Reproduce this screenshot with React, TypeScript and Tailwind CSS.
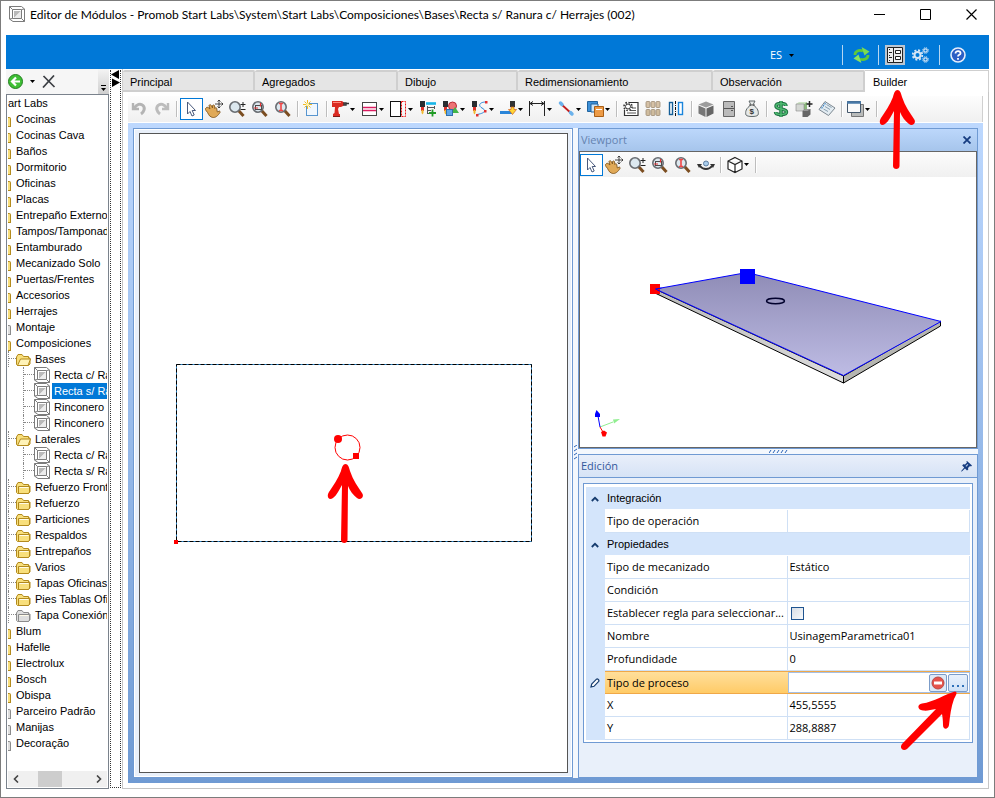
import React from "react";

const sans = "font-['Liberation_Sans',Arial,sans-serif]";
const ui = "font-['Open_Sans','Segoe_UI',sans-serif]";

type Kids = { children: React.ReactNode };

function Ico({ children }: Kids) {
  return (
    <svg width="18" height="18" viewBox="0 0 18 18" fill="none" className="shrink-0" aria-hidden="true">
      {children}
    </svg>
  );
}

function Caret({ className = "fill-black" }: { className?: string }) {
  return (
    <svg width="5" height="3" viewBox="0 0 5 3" className={"shrink-0 " + className} aria-hidden="true">
      <path d="M0 0h5L2.500 3z" />
    </svg>
  );
}

const Undo = () => (
  <Ico>
    <path d="M3 3v6h6" stroke="#b4b4b4" strokeWidth="2.400" />
    <path d="M4 8.500C6.500 4 10.500 3 13 5.500c2.500 2.500 1 6.500-2 8.500" stroke="#b4b4b4" strokeWidth="3" />
  </Ico>
);
const Redo = () => (
  <Ico>
    <path d="M15 3v6H9" stroke="#bcbcbc" strokeWidth="2.400" />
    <path d="M14 8.500C11.500 4 7.500 3 5 5.500c-2.500 2.500-1 6.500 2 8.500" stroke="#bcbcbc" strokeWidth="3" />
  </Ico>
);
const Pointer = () => (
  <Ico>
    <path d="M5.500 2v12l2.500-2.500 2 4.500 2.200-1-2-4.500h3.300z" fill="#fff" stroke="#4a5a7c" strokeLinejoin="round" />
  </Ico>
);
const Hand = () => (
  <Ico>
    <path
      d="M1 8c1-1.500 2.500-.5 4 1L4 5.500c.5-1.200 1.800-1 2.300 0L7.500 8V5.500c.8-1 2-.5 2.100.5l.2 2.500c1-1.500 2-.8 2 .5l.5 3 2-1c1.200.3 1 1.500 0 2.500-2 3-5 5-8 3.500C3.500 16 3.500 13 1 10.500 0 9.500.2 8.600 1 8z"
      fill="#e0a957"
      stroke="#80561d"
      strokeWidth=".9"
    />
    <path d="M14 0v8M10 4h8M14 0l-1.500 1.500M14 0l1.500 1.500M18 4l-1.500-1.500M18 4l-1.500 1.500M14 8l-1.500-1.500M14 8l1.500-1.500" stroke="#333" strokeWidth=".9" />
  </Ico>
);
const Lens = () => (
  <>
    <path d="M10.500 10.500L15.500 16" stroke="#7b4d20" strokeWidth="3" />
    <circle cx="7" cy="7" r="5.200" fill="#dce8ef" stroke="#696d72" strokeWidth="1.600" />
  </>
);
const ZoomPm = () => (
  <Ico>
    <Lens />
    <path d="M15 2v5M12.500 4.500h5M12.500 9.500h5" stroke="#222" />
  </Ico>
);
const ZoomBox = () => (
  <Ico>
    <Lens />
    <rect x="4.500" y="5.500" width="6" height="4" stroke="#4b4b4b" />
    <path d="M3 8h4M9.500 3v3.500" stroke="#e33" strokeWidth="1.200" />
  </Ico>
);
const ZoomFit = () => (
  <Ico>
    <Lens />
    <path d="M5 3.500h4M5 10.500h4M7 4v6" stroke="#f04545" strokeWidth="1.600" />
  </Ico>
);
const NewItem = () => (
  <Ico>
    <rect x="3.500" y="3.500" width="11" height="12" fill="#f1f7fd" stroke="#5795cf" />
    <path d="M4.500 0v9M0 4.500h9M1.500 1.500l6 6M7.500 1.500l-6 6" stroke="#f2bd25" />
    <circle cx="4.500" cy="4.500" r="1.500" fill="#fff7ae" />
  </Ico>
);
const Drill = () => (
  <Ico>
    <path d="M0 1h10l2 1.500v3L9 7H7l-1 2 1 5h1v3H1v-3l1.500-1 .5-6H0z" fill="#da2b22" />
    <path d="M12 3h2v2h-2zM14 3.500h3" stroke="#333" strokeWidth="1.400" />
    <path d="M1 2.500h8" stroke="#ff8b7c" />
    <path d="M1 16.500h7" stroke="#7b1a16" />
  </Ico>
);
const Rails = () => (
  <Ico>
    <rect x="1.500" y="2.500" width="14" height="13" fill="#fff" stroke="#444" />
    <path d="M2 7.500h13M2 10.500h13" stroke="#dc1d61" strokeWidth="1.300" />
  </Ico>
);
const Side = () => (
  <Ico>
    <rect x=".5" y="1.500" width="10" height="15" fill="#fff" stroke="#111" />
    <rect x="11.500" y="1.500" width="4" height="15" stroke="#e11" strokeDasharray="2 1" />
  </Ico>
);
const Bit = () => (
  <>
    <path d="M1 1h5v6H1z" fill="#292d31" />
    <path d="M2 7h3v4H2z" fill="#e0312a" />
    <path d="M2.500 10h2v3l-1 1.500-1-1.500z" fill="#f1b82c" />
  </>
);
const BitList = () => (
  <Ico>
    <Bit />
    <path d="M7 3.500h10" stroke="#17b5e7" strokeWidth="2.600" />
    <path d="M9 7.500h7M9 10.500h3M9 13.500h2M8.500 6v8M15.500 6v3" stroke="#555" />
    <path d="M13.500 9.500v7M10 13h7" stroke="#219b26" strokeWidth="1.800" />
  </Ico>
);
const BitShapes = () => (
  <Ico>
    <Bit />
    <circle cx="10.500" cy="6" r="4" fill="#ee7475" stroke="#b92a35" />
    <path d="M13 7l4 6H9z" fill="#43b649" />
    <rect x="4.500" y="9.500" width="6" height="6" fill="#5ea6e8" stroke="#326faa" />
  </Ico>
);
const BitCurve = () => (
  <Ico>
    <Bit />
    <path d="M15 2C8 2 7 6 11 8s4 5-5 6.500" stroke="#2d87d8" />
    <path d="M14 1h2.500v2.500H14zM13 10h2.500v2.500H13zM5 14h2.500v2.500H5z" fill="#e13030" />
  </Ico>
);
const Edge = () => (
  <Ico>
    <path d="M0 11h12v3H0z" fill="#2b86d9" />
    <path d="M10 1h5v6h-5z" fill="#333" />
    <path d="M11 7h3v2.500h2.500l-4 5-4-5H11z" fill="#ffd633" stroke="#d25e20" strokeWidth=".7" />
  </Ico>
);
const Dimension = () => (
  <Ico>
    <path d="M.5 1v15M15.500 1v15M1 3.500h14M4 1.500l-3 2 3 2M12 1.500l3 2-3 2" stroke="#222" />
  </Ico>
);
const Link = () => (
  <Ico>
    <path d="M3 4l11 10" stroke="#c11d1d" strokeWidth="1.800" />
    <path d="M2.500 3l1.500 1.500M12.500 12.500l1.500 1.500" stroke="#6bb2ec" strokeWidth="3.500" strokeLinecap="round" />
  </Ico>
);
const Copies = () => (
  <Ico>
    <path d="M.5 1.500h10v10H.5z" fill="#3d90d8" stroke="#21639d" />
    <path d="M4 4h7v8H4z" fill="#cde6fa" stroke="#21639d" />
    <path d="M7.500 6.500h9v10h-9z" fill="#ed9b46" stroke="#a95e15" />
    <path d="M9 9.500h6" stroke="#fff" />
  </Ico>
);
const GearPage = () => (
  <Ico>
    <path d="M8 2.500h8v13H2.500V10" fill="#fff" stroke="#333" strokeWidth="1.200" />
    <path d="M10 8h4M8 10.500h6M5 13h9" stroke="#555" />
    <circle cx="6" cy="6.500" r="2.500" fill="#fff" stroke="#333" />
    <circle cx="6" cy="6.500" r="4" stroke="#333" strokeWidth="1.600" strokeDasharray="1.600 1.540" />
  </Ico>
);
const Blocks = () => (
  <Ico>
    {[1, 6, 11].map((x) => (
      <React.Fragment key={x}>
        <rect x={x} y="1.500" width="4" height="6" rx="1" fill="#d5c1a6" stroke="#9d8b74" strokeWidth=".8" />
        <rect x={x} y="9.500" width="4" height="6" rx="1" fill="#cfbc9e" stroke="#9d8b74" strokeWidth=".8" />
      </React.Fragment>
    ))}
  </Ico>
);
const Mirror = () => (
  <Ico>
    <rect x="1.500" y="2.500" width="3" height="12" fill="#fff" stroke="#155f98" strokeWidth="1.400" />
    <path d="M7.500 1v16" stroke="#111" strokeDasharray="3 1 1 1" />
    <rect x="10.500" y="2.500" width="4" height="12" fill="#fff" stroke="#1b85dc" strokeWidth="1.400" />
  </Ico>
);
const Cube = () => (
  <Ico>
    <path d="M9 1.500l7.500 3L9 7.500l-7.500-3z" fill="#9c9c9c" />
    <path d="M1.500 5.500l7 3v8.500l-7-3.500z" fill="#777" />
    <path d="M16.500 5.500l-7 3v8.500l7-3.500z" fill="#666" />
  </Ico>
);
const Cabinet = () => (
  <Ico>
    <path d="M3.500 1.500h11v15h-11z" fill="#bbb" stroke="#666" />
    <path d="M4 8.500h10M11 6.500h2M11 10.500h2" stroke="#555" />
  </Ico>
);
const MoneyBag = () => (
  <Ico>
    <path d="M6 1h6l-2 4c5 3 6 7 5 10-1 2-11 2-12 0-1-3 0-7 5-10z" fill="#e6e9e8" stroke="#61696b" />
    <path d="M6 5h6" stroke="#555" />
    <text x="6.500" y="13.500" fontSize="8" fontFamily="Liberation Sans" fontWeight="700" fill="#333">$</text>
  </Ico>
);
const dollarPath =
  "M14 6c0-2-2-2.500-5-2.500S4 4.200 4 6s2 2.500 5 3 5.500 1.200 5.500 3-2.500 2.500-5.500 2.500S3.500 14 3.500 12M9 1v16";
const Dollar = () => (
  <Ico>
    <path d={dollarPath} stroke="#207044" strokeWidth="3.500" />
    <path d={dollarPath} stroke="#4dbb70" strokeWidth="1.500" />
  </Ico>
);
const AddBlock = () => (
  <Ico>
    <path d="M1 4l3-2h8l-3 2z" fill="#cde3c4" />
    <path d="M9 4l3-2v7l-3 2z" fill="#8cb97c" />
    <path d="M1 4h8v7H1z" fill="#d5d8d4" stroke="#888" strokeWidth=".6" />
    <path d="M7.500 11l3-2h5v5.500l-3 2.500h-5z" fill="#666" />
    <path d="M7.500 11l3-2h5l-3 2z" fill="#999" />
    <path d="M14.500 1v6M11.500 4h6" stroke="#222" strokeWidth="1.500" />
  </Ico>
);
const Tag = () => (
  <Ico>
    <path d="M7 1.500L17 8l-6.500 7.500L1 9.500z" fill="#e3ecf2" stroke="#7c8790" />
    <path d="M8.500 4.500l5 3M7 6.500l5 3M5.500 9l4.500 2.500" stroke="#8aa0b0" />
    <path d="M6.500 3.500l1 .5M5 5.500l1 .5M3.500 7.500l1 .5" stroke="#3b83c4" strokeWidth="1.500" />
  </Ico>
);
const Windows = () => (
  <Ico>
    <path d="M4.500 4.500h12v12h-12z" fill="#b9bbba" stroke="#777" />
    <path d="M.5 1.500h13v11H.5z" fill="#fafafa" stroke="#44576b" />
    <path d="M0 2.500h14" stroke="#4778a7" strokeWidth="2.500" />
  </Ico>
);
const Orbit = () => (
  <Ico>
    <path d="M3 10c3 4 9 4 12 0" stroke="#333" strokeWidth="2" />
    <path d="M0 8h5l-3 4zM18 8h-5l3 4z" fill="#333" />
    <circle cx="9" cy="7.500" r="2.500" fill="#a9cdec" stroke="#5d7da0" />
  </Ico>
);
const WireCube = () => (
  <Ico>
    <path d="M9 1.500l7 3.500v8l-7 3.500L2 13V5zM2 5l7 3.500L16 5M9 8.500v8" fill="#fff" stroke="#222" strokeWidth="1.200" />
  </Ico>
);

function ModuleIcon() {
  return (
    <svg width="16" height="16" viewBox="0 0 16 16" fill="none" className="shrink-0" aria-hidden="true">
      <path d="M.5.500h12l3 2.500v12.500H4L.5 13z" fill="#fff" stroke="#7c7c7c" />
      <path d="M3.500 3.500h9v9h-9z" fill="#fff" stroke="#7c7c7c" />
      <path d="M.5.500l3 3M12.500 3.500L15.500 3M3.500 12.500L.5 13M12.500 12.500l3 3" stroke="#7c7c7c" />
      <path d="M5 12V5h7z" fill="#b9b9b9" />
      <path d="M5 12l7-7v7z" fill="#ececec" />
    </svg>
  );
}

function Folder({ open = false, gray = false }: { open?: boolean; gray?: boolean }) {
  const line = gray ? "#8b8b8b" : "#b38a1d";
  const fill = gray ? "#dedede" : "#f8df7c";
  return (
    <svg width="15" height="14" viewBox="0 0 15 14" className="mt-[2px] shrink-0" aria-hidden="true">
      <path d="M.5 11.500V4l1.500-2.500h4L7.500 3.500h5V5l1.500 0V11l-1.500 1.500h-11z" fill={fill} stroke={line} />
      {open ? (
        <path d="M1.500 12.500l3-6.500h10l-2.500 6.500z" fill="#fff3b8" stroke={line} />
      ) : (
        <path d="M2.500 12.500V5.500h11v5.500l-1 1.500z" fill={fill} stroke={line} />
      )}
      {!open && <path d="M3.500 6.500h9" stroke="#fffbe8" />}
    </svg>
  );
}

function Btn({ label, active, children }: Kids & { label: string; active?: boolean }) {
  return (
    <button
      type="button"
      aria-label={label}
      className={
        "flex h-[22px] w-[23px] shrink-0 items-center " + (active ? "border border-[#0078d7] bg-white pl-px" : "pl-[2px]")
      }
    >
      {children}
    </button>
  );
}

function Drop({ label, children }: Kids & { label: string }) {
  return (
    <button type="button" aria-label={label} className="flex h-[22px] w-[29px] shrink-0 items-center pl-[2px]">
      {children}
      <Caret />
    </button>
  );
}

const Sep = () => <span className="mx-[2px] h-4 w-[2px] shrink-0 border-l border-[#bdbdbd] bg-white" />;

function Arrow() {
  return (
    <path
      d="M18.500 0c2.500 0 3.500 3 4.500 7 3 9 8 16 12 22 3 4-2 8-5 5-4-3-7-7-9-12l-.5 54c0 4-6.500 4-6.500 0L15 21c-3 5-5 10-9 13-4 3-7-1-4-6 4-6 9-13 12-21 1-4 2-7 4.500-7z"
      fill="#f00"
    />
  );
}

type TreeRow = { text: string; kind: "root" | "cat" | "catgray" | "open" | "closed" | "gray" | "leaf"; selected?: boolean };

const tree: TreeRow[] = [
  { text: "art Labs", kind: "root" },
  { text: "Cocinas", kind: "cat" },
  { text: "Cocinas Cava", kind: "cat" },
  { text: "Baños", kind: "cat" },
  { text: "Dormitorio", kind: "cat" },
  { text: "Oficinas", kind: "cat" },
  { text: "Placas", kind: "cat" },
  { text: "Entrepaño Externo", kind: "cat" },
  { text: "Tampos/Tamponados", kind: "cat" },
  { text: "Entamburado", kind: "cat" },
  { text: "Mecanizado Solo", kind: "cat" },
  { text: "Puertas/Frentes", kind: "cat" },
  { text: "Accesorios", kind: "cat" },
  { text: "Herrajes", kind: "cat" },
  { text: "Montaje", kind: "catgray" },
  { text: "Composiciones", kind: "cat" },
  { text: "Bases", kind: "open" },
  { text: "Recta c/ Ranura", kind: "leaf" },
  { text: "Recta s/ Ranura", kind: "leaf", selected: true },
  { text: "Rinconero", kind: "leaf" },
  { text: "Rinconero", kind: "leaf" },
  { text: "Laterales", kind: "open" },
  { text: "Recta c/ Ranura", kind: "leaf" },
  { text: "Recta s/ Ranura", kind: "leaf" },
  { text: "Refuerzo Frontal", kind: "closed" },
  { text: "Refuerzo", kind: "closed" },
  { text: "Particiones", kind: "closed" },
  { text: "Respaldos", kind: "closed" },
  { text: "Entrepaños", kind: "closed" },
  { text: "Varios", kind: "closed" },
  { text: "Tapas Oficinas", kind: "closed" },
  { text: "Pies Tablas Oficina", kind: "closed" },
  { text: "Tapa Conexión", kind: "gray" },
  { text: "Blum", kind: "cat" },
  { text: "Hafelle", kind: "cat" },
  { text: "Electrolux", kind: "cat" },
  { text: "Bosch", kind: "cat" },
  { text: "Obispa", kind: "cat" },
  { text: "Parceiro Padrão", kind: "catgray" },
  { text: "Manijas", kind: "catgray" },
  { text: "Decoração", kind: "catgray" },
];

function TreeItem({ row }: { row: TreeRow }) {
  if (row.kind === "root") return <li className="h-4 whitespace-nowrap">{row.text}</li>;
  if (row.kind === "cat" || row.kind === "catgray") {
    const gray = row.kind === "catgray";
    return (
      <li className="flex h-4 items-center whitespace-nowrap">
        <span
          className={
            "mt-[6px] mr-[5px] h-[10px] w-[3px] shrink-0 rounded-tr-xs border border-l-0 " +
            (gray ? "border-[#8b8b8b] bg-[#dedede]" : "border-[#b38a1d] bg-[#f8df7c]")
          }
        />
        {row.text}
      </li>
    );
  }
  if (row.kind === "leaf") {
    return (
      <li className="flex h-4 items-center whitespace-nowrap">
        <span className="ml-[15px] h-4 w-[11px] shrink-0 border-l border-dotted border-[#888]">
          <span className="block h-2 border-b border-dotted border-[#888]" />
        </span>
        <ModuleIcon />
        <span className={"ml-[2px] h-4 pl-[2px] " + (row.selected ? "bg-[#0078d7] pr-4 text-white" : "")}>{row.text}</span>
      </li>
    );
  }
  return (
    <li className="flex h-4 items-center whitespace-nowrap">
      <span className="h-4 w-2 shrink-0 border-l border-dotted border-[#888]">
        <span className="block h-2 border-b border-dotted border-[#888]" />
      </span>
      <Folder open={row.kind === "open"} gray={row.kind === "gray"} />
      <span className="ml-1">{row.text}</span>
    </li>
  );
}

function TreePane() {
  return (
    <aside className="flex w-[103px] shrink-0 flex-col">
      <div className="flex h-[25px] shrink-0 items-center bg-[#f6f6f6] pl-[2px]">
        <button type="button" aria-label="Atrás">
          <svg width="15" height="15" viewBox="0 0 15 15" fill="none">
            <circle cx="7.500" cy="7.500" r="7" fill="#3fbf35" stroke="#23801f" />
            <path d="M12 7.500H4M8 3.500l-4 4 4 4" stroke="#fff" strokeWidth="2.200" />
          </svg>
        </button>
        <button type="button" aria-label="Historial" className="px-[7px]">
          <Caret />
        </button>
        <button type="button" aria-label="Eliminar">
          <svg width="14" height="13" viewBox="0 0 14 13" fill="none" stroke="#3c3f44" strokeWidth="1.700">
            <path d="M1.500 1l11 11M12 .5L1 12.500" />
          </svg>
        </button>
        <button
          type="button"
          aria-label="Más opciones"
          className="ml-auto flex h-full w-[11px] flex-col items-center justify-end gap-[2px] bg-linear-to-b from-[#f4f4f4] to-[#cfcfcf] pb-[3px]"
        >
          <span className="h-px w-[5px] bg-black" />
          <Caret />
        </button>
      </div>
      <div className="flex min-h-0 flex-1 flex-col border border-[#7a828c] bg-white p-px pt-0">
        <ul className="min-h-0 flex-1 overflow-hidden text-[11px] leading-4 text-black">
          {tree.map((row, i) => (
            <TreeItem key={i} row={row} />
          ))}
        </ul>
        <div className="flex h-4 shrink-0 items-center bg-[#f0f0f0]">
          <button type="button" aria-label="Desplazar a la izquierda" className="flex h-4 w-4 items-center justify-center">
            <svg width="6" height="8" viewBox="0 0 6 8" fill="none" stroke="#444" strokeWidth="1.600">
              <path d="M5 .5L1.500 4 5 7.500" />
            </svg>
          </button>
          <span className="ml-[14px] h-4 w-6 bg-[#cdcdcd]" />
          <button type="button" aria-label="Desplazar a la derecha" className="ml-auto flex h-4 w-4 items-center justify-center">
            <svg width="6" height="8" viewBox="0 0 6 8" fill="none" stroke="#444" strokeWidth="1.600">
              <path d="M1 .5L4.500 4 1 7.500" />
            </svg>
          </button>
        </div>
      </div>
    </aside>
  );
}

function TitleBar() {
  return (
    <header className="flex h-[34px] shrink-0 items-start pl-2">
      <span className="mt-[5px]">
        <ModuleIcon />
      </span>
      <h1 className="ml-[5px] pt-1 font-['Lato','Segoe_UI',sans-serif] text-[12px] leading-5 whitespace-nowrap text-black">
        Editor de Módulos - Promob Start Labs\System\Start Labs\Composiciones\Bases\Recta s/ Ranura c/ Herrajes (002)
      </h1>
      <div className="ml-auto flex h-[27px] items-center gap-[35px] pr-[17px]">
        <button type="button" aria-label="Minimizar">
          <svg width="11" height="11" viewBox="0 0 11 11" fill="none" stroke="#000">
            <path d="M0 5.500h11" />
          </svg>
        </button>
        <button type="button" aria-label="Maximizar">
          <svg width="11" height="11" viewBox="0 0 11 11" fill="none" stroke="#000">
            <path d="M.5.500h10v10H.5z" />
          </svg>
        </button>
        <button type="button" aria-label="Cerrar">
          <svg width="11" height="11" viewBox="0 0 11 11" fill="none" stroke="#000" strokeWidth="1.200">
            <path d="M.5.500l10 10M10.500.500l-10 10" />
          </svg>
        </button>
      </div>
    </header>
  );
}

const BlueSep = () => <span className="h-5 w-px bg-[#b5d6f2]" />;

function BlueBar() {
  return (
    <div className="flex h-[34px] shrink-0 items-center justify-end bg-[#0078d7] pt-[5px] pr-[23px]">
      <div className="relative mr-12 flex items-center">
        <select
          aria-label="Idioma"
          className={"w-6 appearance-none bg-transparent text-[11px] leading-4 text-white outline-none " + ui}
        >
          <option>ES</option>
        </select>
        <span className="pointer-events-none absolute top-[7px] right-0">
          <Caret />
        </span>
      </div>
      <BlueSep />
      <button type="button" aria-label="Actualizar" className="mr-2 ml-[10px]">
        <svg width="17" height="16" viewBox="0 0 17 16" fill="none">
          <path d="M2 8c0-4 4-5.500 8-4" stroke="#5fc83a" strokeWidth="2.800" />
          <path d="M8.500 0l8 4.500-5 4z" fill="#7bdc4f" />
          <path d="M15 8c0 4-4 5.500-8 4" stroke="#5fc83a" strokeWidth="2.800" />
          <path d="M8.500 16l-8-4.500 5-4z" fill="#8ae35c" />
        </svg>
      </button>
      <BlueSep />
      <button type="button" aria-label="Panel" className="ml-[6px] flex h-5 w-5 items-center justify-center bg-[#bcc7d2]">
        <svg width="16" height="16" viewBox="0 0 16 16" fill="none" stroke="#222">
          <path d="M.5.500h15v15H.5zM6.500.500v15" fill="#eee" />
          <path d="M2 2.500h1M2 5.500h3M2 8.500h1M2 10.500h3M2 13.500h1" />
          <path d="M8.500 3.500h5v3h-5zM8.500 9.500h5v3h-5z" fill="#fff" />
        </svg>
      </button>
      <button type="button" aria-label="Configuración" className="mr-[10px] ml-[7px]">
        <svg width="17" height="16" viewBox="0 0 17 16" fill="none" stroke="#d6e6f5">
          <circle cx="5.500" cy="8" r="3" strokeWidth="2" />
          <circle cx="5.500" cy="8" r="4.800" strokeWidth="1.800" strokeDasharray="2 1.770" />
          <circle cx="13.500" cy="3.500" r="1.700" strokeWidth="1.200" />
          <circle cx="13.500" cy="3.500" r="2.800" strokeDasharray="1.200 1" />
          <circle cx="13.500" cy="12.500" r="1.700" strokeWidth="1.200" />
          <circle cx="13.500" cy="12.500" r="2.800" strokeDasharray="1.200 1" />
        </svg>
      </button>
      <BlueSep />
      <button type="button" aria-label="Ayuda" className="ml-[10px]">
        <svg width="16" height="16" viewBox="0 0 16 16" fill="none">
          <circle cx="8" cy="8" r="7" fill="#2c5fc5" stroke="#e5eefc" strokeWidth="1.600" />
          <path d="M5.500 6.500c0-3.500 5.500-3 5 0-.3 1.500-2.500 1.200-2.500 3M8 11v1.800" stroke="#fff" strokeWidth="1.800" />
        </svg>
      </button>
    </div>
  );
}

const tabs = [
  { text: "Principal", width: "w-[132px]" },
  { text: "Agregados", width: "w-[143px]" },
  { text: "Dibujo", width: "w-[120px]" },
  { text: "Redimensionamiento", width: "w-[195px]" },
  { text: "Observación", width: "w-[152px]" },
];

function Tabs() {
  return (
    <div role="tablist" className="flex h-[23px] shrink-0 border-l border-[#cfcfcf] pt-px text-[11px] text-black">
      {tabs.map((t) => (
        <button
          key={t.text}
          type="button"
          role="tab"
          className={
            "h-[22px] rounded-t-xs border-2 border-l-0 border-[#cfcfcf] bg-[#e5e5e5] pt-px pr-1 pl-[7px] text-left leading-4 " +
            t.width
          }
        >
          {t.text}
        </button>
      ))}
      <div className="relative flex flex-1">
        <button
          type="button"
          role="tab"
          aria-selected="true"
          className="h-[22px] flex-1 border-t border-r border-[#cfcfcf] bg-white pt-px pl-2 text-left"
        >
          Builder
        </button>
        <svg width="37" height="80" viewBox="0 0 37 80" className="pointer-events-none absolute top-5 left-[14px] z-10">
          <Arrow />
        </svg>
      </div>
    </div>
  );
}

function MainToolbar() {
  return (
    <div
      role="toolbar"
      className="flex h-[26px] shrink-0 items-center overflow-hidden border-r border-[#d0d0d0] bg-linear-to-b from-[#fdfdfd] to-[#f0f0f0]"
    >
      <Btn label="Deshacer"><Undo /></Btn>
      <Btn label="Rehacer"><Redo /></Btn>
      <Sep />
      <Btn label="Seleccionar" active><Pointer /></Btn>
      <Btn label="Desplazar"><Hand /></Btn>
      <Btn label="Zoom"><ZoomPm /></Btn>
      <Btn label="Zoom ventana"><ZoomBox /></Btn>
      <Btn label="Zoom extensión"><ZoomFit /></Btn>
      <Sep />
      <Btn label="Nuevo"><NewItem /></Btn>
      <Sep />
      <Drop label="Perforación"><Drill /></Drop>
      <Drop label="Ranura"><Rails /></Drop>
      <Drop label="Lateral"><Side /></Drop>
      <Btn label="Lista de mecanizados"><BitList /></Btn>
      <Drop label="Formas"><BitShapes /></Drop>
      <Drop label="Curvas"><BitCurve /></Drop>
      <Drop label="Canto"><Edge /></Drop>
      <Drop label="Cotas"><Dimension /></Drop>
      <Drop label="Conexión"><Link /></Drop>
      <Drop label="Copiar"><Copies /></Drop>
      <Sep />
      <Btn label="Propiedades"><GearPage /></Btn>
      <Btn label="Módulos"><Blocks /></Btn>
      <Btn label="Espejo"><Mirror /></Btn>
      <Sep />
      <Btn label="Cubo"><Cube /></Btn>
      <Btn label="Mueble"><Cabinet /></Btn>
      <Btn label="Presupuesto"><MoneyBag /></Btn>
      <Sep />
      <Btn label="Precio"><Dollar /></Btn>
      <Btn label="Agregar bloque"><AddBlock /></Btn>
      <Btn label="Etiqueta"><Tag /></Btn>
      <Sep />
      <Drop label="Ventanas"><Windows /></Drop>
      <Sep />
    </div>
  );
}

function Canvas() {
  return (
    <section className="flex min-w-0 flex-1 border border-[#6f9ad3] bg-[#e9f0fa] p-1 pl-[5px] outline outline-white -outline-offset-2">
      <div className="flex min-w-0 flex-1 items-center justify-center overflow-hidden border border-[#555] bg-white">
        <svg width="360" height="184" viewBox="174 361 360 184" className="shrink-0" fill="none" role="img" aria-label="Plano de la pieza">
          <path d="M176.500 364.500h355v177h-355z" stroke="#2f86c8" />
          <path d="M176.500 364.500h355v177h-355z" stroke="#000" strokeDasharray="4 2" />
          <path d="M174 540h4v4h-4z" fill="#f00" />
          <circle cx="347.500" cy="447.500" r="12.500" stroke="#f00" strokeWidth="1" />
          <circle cx="338" cy="439" r="4" fill="#f00" />
          <path d="M353 453h6v6h-6z" fill="#f00" />
          <g transform="translate(327 464)">
            <Arrow />
          </g>
        </svg>
      </div>
    </section>
  );
}

function Viewport() {
  return (
    <section className="flex min-h-0 flex-1 flex-col border border-[#6f9ad3]">
      <div className="flex h-[22px] shrink-0 items-center justify-between bg-linear-to-b from-[#bcd7fb] to-[#a6c5ec] pr-[6px] pl-[2px]">
        <h2 className={"text-[11px] leading-4 text-[#6583b0] " + ui}>Viewport</h2>
        <button type="button" aria-label="Cerrar Viewport">
          <svg width="8" height="8" viewBox="0 0 8 8" stroke="#163c80" strokeWidth="1.800">
            <path d="M.5.500l7 7M7.500.500l-7 7" />
          </svg>
        </button>
      </div>
      <div className="flex min-h-0 flex-1 flex-col border border-[#666] bg-white">
        <div className="flex h-[25px] shrink-0 items-center bg-linear-to-b from-[#fcfcfc] to-[#f0f0f0]">
          <Btn label="Seleccionar en 3D" active><Pointer /></Btn>
          <Btn label="Desplazar 3D"><Hand /></Btn>
          <Btn label="Zoom 3D"><ZoomPm /></Btn>
          <Btn label="Zoom ventana 3D"><ZoomBox /></Btn>
          <Btn label="Zoom extensión 3D"><ZoomFit /></Btn>
          <Btn label="Órbita"><Orbit /></Btn>
          <Sep />
          <Drop label="Vista"><WireCube /></Drop>
          <Sep />
        </div>
        <div className="flex min-h-0 flex-1 items-center justify-center overflow-hidden">
          <svg width="396" height="268" viewBox="580 178 396 268" className="shrink-0" fill="none" role="img" aria-label="Vista 3D">
            <defs>
              <linearGradient id="top" x1="0" y1="0" x2="0" y2="1">
                <stop offset="0" stopColor="#8f8cb6" />
                <stop offset="1" stopColor="#bebce4" />
              </linearGradient>
              <linearGradient id="side" x1="0" y1="0" x2="1" y2="0">
                <stop offset="0" stopColor="#b9b9b9" />
                <stop offset="1" stopColor="#dddddd" />
              </linearGradient>
            </defs>
            <path d="M656 289.500v4L843.500 383v-7z" fill="url(#side)" stroke="#000" />
            <path d="M843.500 376v7l97-57v-5z" fill="#b5b5b0" stroke="#000" />
            <path d="M655.500 289L747 272.500l194 49-97.500 54z" fill="url(#top)" stroke="#00f" />
            <ellipse cx="775.500" cy="301" rx="9" ry="2.700" stroke="#00002c" strokeWidth="1.400" />
            <path d="M650 284h10v10h-10z" fill="#f00" />
            <path d="M740 269h15v15h-15z" fill="#00f" />
            <path d="M655.500 289l6-1M655.500 289l5 2.500" stroke="#00f" />
            <path d="M600 427l13-5" stroke="#90ee90" />
            <path d="M613 419.500l7-.5-6 4.500z" fill="#90ee90" />
            <path d="M600 427l-2-11" stroke="#00f" />
            <path d="M596.500 410l3.500 4v3h-5v-3z" fill="#00f" />
            <path d="M600 427l3 5" stroke="#f00" />
            <path d="M601 432l3-1.500 3 2-1.500 4h-3z" fill="#f00" />
          </svg>
        </div>
      </div>
    </section>
  );
}

type Prop = { name: string; value?: string; kind?: "check" | "edit" };

const groups: { title: string; props: Prop[] }[] = [
  { title: "Integración", props: [{ name: "Tipo de operación" }] },
  {
    title: "Propiedades",
    props: [
      { name: "Tipo de mecanizado", value: "Estático" },
      { name: "Condición" },
      { name: "Establecer regla para seleccionar...", kind: "check" },
      { name: "Nombre", value: "UsinagemParametrica01" },
      { name: "Profundidade", value: "0" },
      { name: "Tipo de proceso", kind: "edit" },
      { name: "X", value: "455,5555" },
      { name: "Y", value: "288,8887" },
    ],
  },
];

const cell = "h-[23px] truncate border-r border-b border-[#cfe0f5] bg-white px-[2px] text-left font-normal";

function PropRow({ p }: { p: Prop }) {
  if (p.kind === "edit") {
    return (
      <tr>
        <td className="bg-[#d4e5fb]">
          <svg width="10" height="10" viewBox="0 0 10 10" className="ml-1" fill="#fff" stroke="#163c6e" strokeWidth="1.200" aria-hidden="true">
            <path d="M1 9l.7-3L6.500 1.200c1-.8 3 1 2.200 2.200L4 8.300z" />
          </svg>
        </td>
        <th scope="row" className="h-[23px] border-y border-[#f0a848] bg-linear-to-b from-[#ffdf9b] to-[#ffcb66] px-[2px] text-left font-normal">
          <label htmlFor="proceso">{p.name}</label>
        </th>
        <td className="h-[23px] border-y border-[#f0a848] bg-white">
          <div className="relative flex h-[21px] items-center gap-px border border-[#a5c0e6] pr-px">
            <input id="proceso" type="text" className="h-[18px] min-w-0 flex-1 px-[2px] outline-none" />
            <button
              type="button"
              aria-label="Quitar"
              className="flex h-[18px] w-[18px] items-center justify-center rounded-xs border border-[#7b9cc9] bg-[#dce9f8]"
            >
              <svg width="14" height="14" viewBox="0 0 14 14">
                <circle cx="7" cy="7" r="6" fill="#e5534b" stroke="#b94a45" />
                <path d="M3 5.500h8v3H3z" fill="#fff" />
              </svg>
            </button>
            <button
              type="button"
              aria-label="Elegir proceso"
              className="flex h-[18px] w-5 items-end justify-center gap-[3px] rounded-xs border border-[#7b9cc9] bg-linear-to-b from-[#e8f1fc] to-[#cfe1f7] pb-1"
            >
              <span className="size-[2px] bg-[#2e70b8]" />
              <span className="size-[2px] bg-[#2e70b8]" />
              <span className="size-[2px] bg-[#2e70b8]" />
            </button>
            <svg width="58" height="62" viewBox="900 690 58 62" className="pointer-events-none absolute top-[18px] right-3 z-10">
              <path
                d="M956 690.500c3 .5 1 3.500-1 7.500-3 8-4 17-5 26-1 5-6 5-6 0 0-5-.5-8-1-11l-35 35c-4 3-8-1-5-5l34-35c-5 1-9 2-13 1.500-6-.5-6-6.500-1-7 12-1.500 23-9.500 33-12z"
                fill="#f00"
              />
            </svg>
          </div>
        </td>
      </tr>
    );
  }
  return (
    <tr>
      <td className="bg-[#d4e5fb]" />
      <th scope="row" className={cell}>
        {p.kind === "check" ? <label htmlFor="regla">{p.name}</label> : p.name}
      </th>
      <td className={cell}>
        {p.kind === "check" ? (
          <input
            id="regla"
            type="checkbox"
            className="ml-px block size-[13px] appearance-none border border-[#1f5490] bg-linear-to-br from-[#d8dee6] to-[#f7f9fb]"
          />
        ) : (
          p.value
        )}
      </td>
    </tr>
  );
}

function Edition() {
  return (
    <section className="flex h-[324px] shrink-0 flex-col border border-[#6f9ad3] bg-[#e9f0fa]">
      <div className="flex h-[23px] shrink-0 items-center justify-between border-b border-[#6f9ad3] bg-linear-to-b from-[#e9effa] to-[#d6e3f6] pr-[5px] pl-[2px]">
        <h2 className={"text-[11px] leading-4 text-[#33589c] " + ui}>Edición</h2>
        <button type="button" aria-label="Anclar panel">
          <svg width="11" height="11" viewBox="0 0 11 11" fill="#163c80">
            <path d="M6 0l5 4.500-1 1-1-.5-2 2 .3 1.500-1.300 1L4 7.500.8 10.500 0 10.300 3.200 6.500 1.200 4.500l1-1.200L4 3.500l2-2-.7-.7z" />
            <path d="M4.500 5l2-2 .8.7-2 2z" fill="#b9cdea" />
          </svg>
        </button>
      </div>
      <div className="mx-1 mt-[5px] border border-[#6f9ad3] bg-white px-[2px] pt-[3px] pb-[2px]">
        <table className={"w-full table-fixed border-separate border-spacing-0 text-[11px] leading-4 text-black " + ui}>
          <colgroup>
            <col className="w-[19px]" />
            <col />
            <col />
          </colgroup>
          {groups.map((g) => (
            <tbody key={g.title}>
              <tr>
                <td className="h-[23px] bg-[#d4e5fb]">
                  <button type="button" aria-label={"Contraer " + g.title} className="ml-[5px] block">
                    <svg width="8" height="6" viewBox="0 0 8 6" fill="none" stroke="#163c6e" strokeWidth="1.800">
                      <path d="M.8 5L4 1.800 7.200 5" />
                    </svg>
                  </button>
                </td>
                <th colSpan={2} scope="rowgroup" className={"h-[23px] border-b border-white bg-[#d4e5fb] px-[2px] text-left font-normal " + sans}>
                  {g.title}
                </th>
              </tr>
              {g.props.map((p) => (
                <PropRow key={p.name} p={p} />
              ))}
            </tbody>
          ))}
        </table>
      </div>
    </section>
  );
}

export default function App() {
  return (
    <div className={"flex h-screen flex-col overflow-hidden border border-[#7c7c7c] bg-white " + sans}>
      <TitleBar />
      <div className="mx-[5px] mb-2 flex min-h-0 flex-1 flex-col">
        <BlueBar />
        <div className="flex min-h-0 flex-1">
          <TreePane />
          <div className="flex w-[13px] shrink-0 justify-center pt-px pb-px">
            <div className="w-[11px] border-x border-b border-dotted border-[#333]">
              <svg width="9" height="17" viewBox="0 0 9 17" fill="#000" aria-hidden="true">
                <path d="M0 4.500L8 0v9zM9 12.500L1 8.500v8.500z" />
              </svg>
            </div>
          </div>
          <div className="flex min-w-0 flex-1 flex-col">
            <Tabs />
            <main className="flex min-h-0 flex-1 flex-col border border-t-0 border-[#c6c6c6] p-[5px] pt-1">
              <MainToolbar />
              <div className="mt-px flex min-h-0 flex-1 bg-linear-to-b from-[#bdd8fe] to-[#6f9ad3] p-[5px]">
                <div className="flex min-w-0 flex-1 bg-[#f4f8fd]">
                  <Canvas />
                  <div className="flex w-[5px] shrink-0 items-center justify-center">
                    <svg width="3" height="17" viewBox="0 0 3 17" stroke="#2b63b5" fill="none" aria-hidden="true">
                      <path d="M0 2l3-2M0 6l3-2M0 10l3-2M0 14l3-2" />
                    </svg>
                  </div>
                  <div className="flex w-[400px] shrink-0 flex-col">
                    <Viewport />
                    <div className="flex h-[5px] shrink-0 items-center justify-center">
                      <svg width="19" height="3" viewBox="0 0 19 3" stroke="#2b63b5" fill="none" aria-hidden="true">
                        <path d="M0 3l2-3M4 3l2-3M8 3l2-3M12 3l2-3M16 3l2-3" />
                      </svg>
                    </div>
                    <Edition />
                  </div>
                </div>
              </div>
            </main>
          </div>
        </div>
      </div>
    </div>
  );
}
